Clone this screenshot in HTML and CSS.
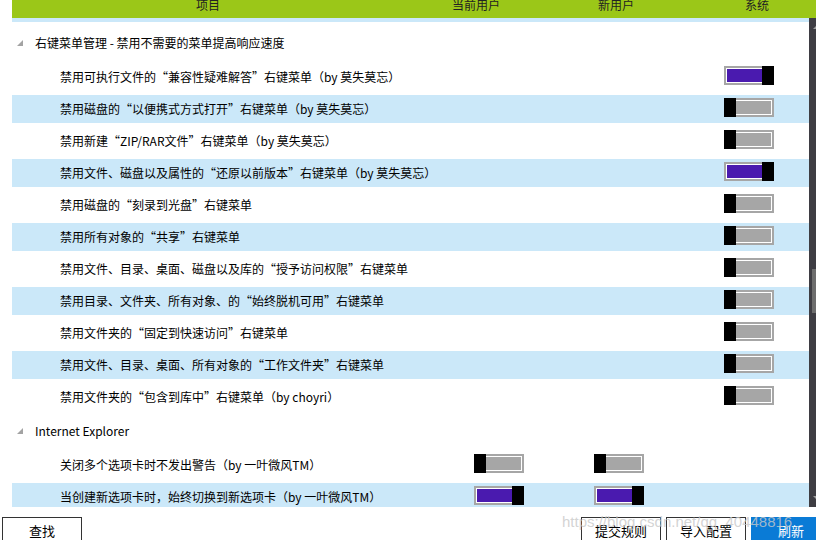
FILE: index.html
```html
<!DOCTYPE html>
<html lang="zh-CN">
<head>
  <meta charset="UTF-8">
  <meta name="viewport" content="width=device-width, initial-scale=1.0">
  <title>右键菜单管理</title>
  <link rel="stylesheet" href="styles.css">
</head>
<body>
  <div class="app">
    <div class="head">
      <span class="hc hc-item">项目</span>
      <span class="hc hc-cur">当前用户</span>
      <span class="hc hc-new">新用户</span>
      <span class="hc hc-sys">系统</span>
    </div>

    <div class="main">
      <div class="list">
        <div class="list-edge"></div>

        <div class="group">
          <div class="group-title">
            <svg class="caret" width="6" height="6" viewBox="0 0 6 6"><polygon points="6,0 6,6 0,6"/></svg>
            右键菜单管理 - 禁用不需要的菜单提高响应速度
          </div>
          <div class="row">
            <span class="label">禁用可执行文件的“兼容性疑难解答”右键菜单（by 莫失莫忘）</span>
            <span class="cell"></span>
            <span class="cell"></span>
            <span class="cell"><span class="toggle on"><span class="knob"></span></span></span>
          </div>
          <div class="row alt">
            <span class="label">禁用磁盘的“以便携式方式打开”右键菜单（by 莫失莫忘）</span>
            <span class="cell"></span>
            <span class="cell"></span>
            <span class="cell"><span class="toggle"><span class="knob"></span></span></span>
          </div>
          <div class="row">
            <span class="label">禁用新建“ZIP/RAR文件”右键菜单（by 莫失莫忘）</span>
            <span class="cell"></span>
            <span class="cell"></span>
            <span class="cell"><span class="toggle"><span class="knob"></span></span></span>
          </div>
          <div class="row alt">
            <span class="label">禁用文件、磁盘以及属性的“还原以前版本”右键菜单（by 莫失莫忘）</span>
            <span class="cell"></span>
            <span class="cell"></span>
            <span class="cell"><span class="toggle on"><span class="knob"></span></span></span>
          </div>
          <div class="row">
            <span class="label">禁用磁盘的“刻录到光盘”右键菜单</span>
            <span class="cell"></span>
            <span class="cell"></span>
            <span class="cell"><span class="toggle"><span class="knob"></span></span></span>
          </div>
          <div class="row alt">
            <span class="label">禁用所有对象的“共享”右键菜单</span>
            <span class="cell"></span>
            <span class="cell"></span>
            <span class="cell"><span class="toggle"><span class="knob"></span></span></span>
          </div>
          <div class="row">
            <span class="label">禁用文件、目录、桌面、磁盘以及库的“授予访问权限”右键菜单</span>
            <span class="cell"></span>
            <span class="cell"></span>
            <span class="cell"><span class="toggle"><span class="knob"></span></span></span>
          </div>
          <div class="row alt">
            <span class="label">禁用目录、文件夹、所有对象、的“始终脱机可用”右键菜单</span>
            <span class="cell"></span>
            <span class="cell"></span>
            <span class="cell"><span class="toggle"><span class="knob"></span></span></span>
          </div>
          <div class="row">
            <span class="label">禁用文件夹的“固定到快速访问”右键菜单</span>
            <span class="cell"></span>
            <span class="cell"></span>
            <span class="cell"><span class="toggle"><span class="knob"></span></span></span>
          </div>
          <div class="row alt">
            <span class="label">禁用文件、目录、桌面、所有对象的“工作文件夹”右键菜单</span>
            <span class="cell"></span>
            <span class="cell"></span>
            <span class="cell"><span class="toggle"><span class="knob"></span></span></span>
          </div>
          <div class="row">
            <span class="label">禁用文件夹的“包含到库中”右键菜单（by choyri）</span>
            <span class="cell"></span>
            <span class="cell"></span>
            <span class="cell"><span class="toggle"><span class="knob"></span></span></span>
          </div>
        </div>

        <div class="group">
          <div class="group-title">
            <svg class="caret" width="6" height="6" viewBox="0 0 6 6"><polygon points="6,0 6,6 0,6"/></svg>
            Internet Explorer
          </div>
          <div class="row">
            <span class="label">关闭多个选项卡时不发出警告（by 一叶微风TM）</span>
            <span class="cell"><span class="toggle"><span class="knob"></span></span></span>
            <span class="cell"><span class="toggle"><span class="knob"></span></span></span>
            <span class="cell"></span>
          </div>
          <div class="row alt">
            <span class="label">当创建新选项卡时，始终切换到新选项卡（by 一叶微风TM）</span>
            <span class="cell"><span class="toggle on"><span class="knob"></span></span></span>
            <span class="cell"><span class="toggle on"><span class="knob"></span></span></span>
            <span class="cell"></span>
          </div>
        </div>
      </div>

      <div class="scroll">
        <span class="sb-up"></span>
        <span class="sb-thumb"></span>
        <span class="sb-down"></span>
      </div>
    </div>

    <div class="foot">
      <button class="btn">查找</button>
      <div class="foot-right">
        <button class="btn">提交规则</button>
        <button class="btn">导入配置</button>
        <button class="btn primary">刷新</button>
      </div>
    </div>

    <div class="watermark">https://blog.csdn.net/qq_40448816</div>
  </div>
</body>
</html>
```

FILE: styles.css
```css
html, body {
  margin: 0;
  padding: 0;
  background: #fff;
}

body {
  font-family: "Noto Sans CJK SC", "Noto Sans", sans-serif;
  font-size: 12px;
  color: #000;
}

.app {
  position: relative;
  width: 816px;
  height: 540px;
  overflow: hidden;
}

/* column header */
.head {
  display: flex;
  height: 18px;
  margin-left: 12px;
  background: #9bc718;
  color: #222;
  line-height: 10px;
  overflow: hidden;
}

.hc {
  flex: none;
  text-align: center;
}

.hc-item { width: 392px; }
.hc-cur  { width: 144px; }
.hc-new  { width: 136px; }
.hc-sys  { width: 146px; }

/* list + scrollbar */
.main {
  display: flex;
  height: 489px;
}

.list {
  flex: 1;
  margin-left: 12px;
  overflow: hidden;
}

.list-edge {
  height: 4px;
  background: #cbe8f9;
}

.group {
  padding-top: 5px;
}

.group + .group {
  padding-top: 0;
  margin-top: 1px;
}

.group-title {
  display: flex;
  align-items: flex-start;
  height: 36px;
  line-height: 32px;
  padding-left: 5px;
}

.caret {
  flex: none;
  margin: 13px 12px 0 0;
  fill: #a3a3a3;
}

.row {
  display: grid;
  grid-template-columns: 1fr 120px 130px 85px;
  height: 28px;
  margin-bottom: 4px;
  line-height: 28px;
}

.row.alt {
  background: #cbe8f9;
}

.label {
  margin: 0 44px 0 48px;
  overflow: hidden;
  white-space: nowrap;
}

.cell {
  display: flex;
  align-items: flex-start;
}

/* on/off switch */
.toggle {
  position: relative;
  box-sizing: border-box;
  width: 50px;
  height: 19px;
  margin-top: 3px;
  border: 2px solid #a6a6a6;
  background: #a6a6a6;
  box-shadow: inset 0 0 0 1px #fff;
}

.toggle.on {
  background: #4a1aaf;
}

.knob {
  position: absolute;
  top: -2px;
  bottom: -2px;
  left: -2px;
  width: 12px;
  background: #000;
}

.toggle.on .knob {
  left: auto;
  right: -2px;
}

.scroll {
  flex: none;
  display: flex;
  flex-direction: column;
  width: 7px;
  background: #3e3d43;
}

.sb-up,
.sb-down {
  width: 0;
  height: 0;
  margin-left: 4px;
  border-left: 3px solid transparent;
  border-right: 3px solid transparent;
}

.sb-up {
  margin-top: 8px;
  border-bottom: 3px solid #9c9c9c;
}

.sb-thumb {
  width: 4px;
  height: 44px;
  margin: 240px 0 0 3px;
  background: #6d6d6d;
}

.sb-down {
  margin-top: auto;
  margin-bottom: 8px;
  border-top: 3px solid #9c9c9c;
}

/* bottom buttons */
.foot {
  display: flex;
  justify-content: space-between;
  padding: 10px 0 0 2px;
  margin-right: -15px;
}

.foot-right {
  display: flex;
  gap: 5px;
}

.btn {
  width: 80px;
  height: 28px;
  padding: 0;
  font-family: inherit;
  font-size: 13px;
  line-height: 26px;
  color: #000;
  background: #fff;
  border: 1px solid #333;
  border-radius: 0;
}

.btn.primary {
  color: #fff;
  background: #0a7bd6;
  border-color: #0a7bd6;
}

.watermark {
  position: absolute;
  left: 562px;
  top: 513px;
  font-family: "Liberation Sans", Arial, sans-serif;
  font-size: 15px;
  line-height: 17px;
  color: rgba(200, 200, 200, 0.8);
  pointer-events: none;
}
```
